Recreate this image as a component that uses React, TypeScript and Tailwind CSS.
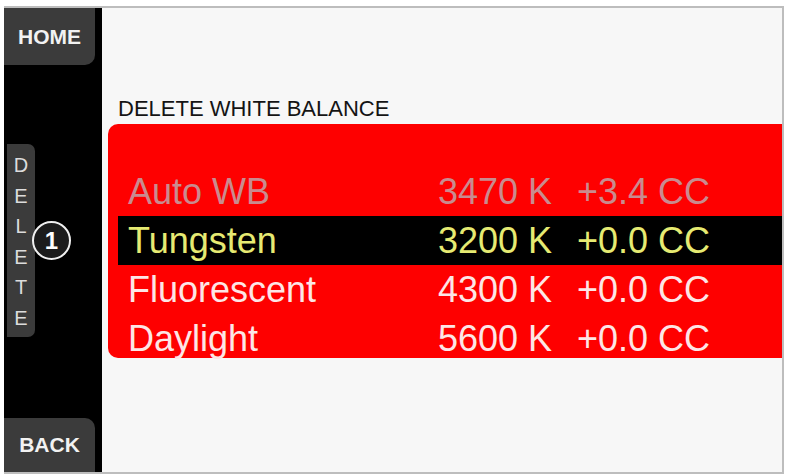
import React from "react";

type Row = {
  name: string;
  kelvin: string;
  cc: string;
  state: "disabled" | "selected" | "normal";
};

const rows: Row[] = [
  { name: "Auto WB", kelvin: "3470 K", cc: "+3.4 CC", state: "disabled" },
  { name: "Tungsten", kelvin: "3200 K", cc: "+0.0 CC", state: "selected" },
  { name: "Fluorescent", kelvin: "4300 K", cc: "+0.0 CC", state: "normal" },
  { name: "Daylight", kelvin: "5600 K", cc: "+0.0 CC", state: "normal" },
];

const font = { fontFamily: '"Liberation Sans", Arial, sans-serif' };

function ListRow({ row }: { row: Row }) {
  const rowClass =
    row.state === "selected"
      ? "bg-black text-[#e6ea72]"
      : row.state === "disabled"
        ? "text-[#c98b8f]"
        : "text-[#fde6e6]";
  return (
    <div className={`ml-[10px] flex h-[49px] items-center text-[36px] leading-[49px] ${rowClass}`}>
      <span className="w-[320px] shrink-0 pl-[10px]">{row.name}</span>
      <span className="w-[139px] shrink-0 whitespace-pre">{row.kelvin}</span>
      <span className="whitespace-pre">{row.cc}</span>
    </div>
  );
}

export default function App() {
  return (
    <div
      className="h-[476px] w-[787px] overflow-hidden bg-white pb-[2px] pl-[4px] pr-[3px] pt-[6px]"
      style={font}
    >
      <div className="flex h-full w-full border-y-2 border-r-2 border-[#bdbdbd]">
        {/* Soft-key sidebar */}
        <div className="relative flex w-[98px] shrink-0 flex-col bg-black">
          <div className="flex h-[57px] w-[91px] items-center justify-center rounded-br-[10px] bg-[#3b3b3b] text-[21px] font-bold text-[#f2f2f2]">
            HOME
          </div>
          <div className="flex-1">
            <div className="ml-[3px] mt-[79px] flex h-[193px] w-[28px] flex-col items-center rounded-r-[7px] bg-[#3b3b3b] pt-[6px] text-[20px] leading-[30.6px] text-[#dcdcdc]">
              {"DELETE".split("").map((ch, i) => (
                <span key={i}>{ch}</span>
              ))}
            </div>
          </div>
          <div className="flex h-[54px] w-[91px] items-center justify-center rounded-tr-[10px] bg-[#3b3b3b] text-[21px] font-bold text-[#f2f2f2]">
            BACK
          </div>
          {/* Callout marker */}
          <div className="absolute left-[28px] top-[213px] flex h-[39px] w-[39px] items-center justify-center rounded-full border-2 border-[#f0f0f0] bg-[#1c1c1c] text-[24px] font-bold text-white">
            1
          </div>
        </div>

        {/* Screen content */}
        <div className="flex flex-1 flex-col bg-[#f7f7f7] pt-[90px]">
          <div className="pl-[16px] text-[22px] leading-[22px] text-[#141414]">
            DELETE WHITE BALANCE
          </div>
          <div className="ml-[6px] mt-[4px] h-[234px] rounded-l-[10px] bg-[#fe0000] pt-[43px]">
            {rows.map((r, i) => (
              <div key={r.name} className={i === rows.length - 1 ? "h-[28px]" : ""}>
                <ListRow row={r} />
              </div>
            ))}
          </div>
        </div>
      </div>
    </div>
  );
}
